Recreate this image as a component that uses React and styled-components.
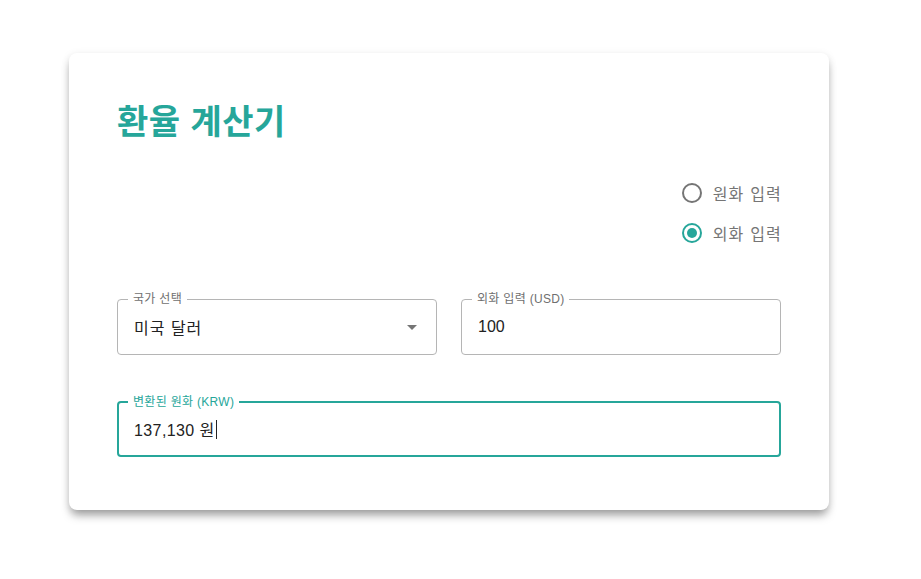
import React from "react";
import styled, { createGlobalStyle } from "styled-components";

const TEAL = "#26a69a";
const FONT = `"Liberation Sans", "Noto Sans CJK KR", "Noto Sans", sans-serif`;

const Global = createGlobalStyle`
  html, body { margin: 0; padding: 0; background: #ffffff; }
  body { font-family: ${FONT}; }
  * { box-sizing: border-box; }
`;

const Page = styled.div`
  padding: 53px 0 69px 69px;
`;

const Card = styled.div`
  width: 760px;
  background: #fff;
  border-radius: 8px;
  box-shadow: 0 7px 10px -2px rgba(0, 0, 0, 0.35), 0 2px 8px rgba(0, 0, 0, 0.1);
  padding: 48px 48px 53px;
`;

const Title = styled.h1`
  margin: 0;
  font-family: ${FONT};
  font-size: 34px;
  line-height: 42px;
  font-weight: 700;
  color: ${TEAL};
  letter-spacing: 0.5px;
`;

const RadioGroup = styled.div`
  display: flex;
  flex-direction: column;
  align-items: flex-end;
  margin-top: 30px;
`;

const Option = styled.label`
  display: flex;
  align-items: center;
  height: 40px;
  gap: 11px;
  font-size: 16px;
  letter-spacing: 1.2px;
  margin-right: -1px;
  color: #757575;
  cursor: pointer;
`;

const RadioCircle = styled.span`
  width: 20px;
  height: 20px;
  border-radius: 50%;
  border: 2px solid ${(p) => (p.$checked ? TEAL : "#757575")};
  display: flex;
  align-items: center;
  justify-content: center;
  &::after {
    content: "";
    width: 10px;
    height: 10px;
    border-radius: 50%;
    background: ${TEAL};
    display: ${(p) => (p.$checked ? "block" : "none")};
  }
`;

const Row = styled.div`
  display: grid;
  grid-template-columns: 1fr 1fr;
  gap: 24px;
  margin-top: ${(p) => p.$mt}px;
`;

const Field = styled.div`
  position: relative;
  height: 56px;
  border: ${(p) => (p.$focused ? `2px solid ${TEAL}` : "1px solid #b5b5b5")};
  border-radius: 4px;
  display: flex;
  align-items: center;
  padding: 0 ${(p) => (p.$focused ? 15 : 16)}px;
  margin-top: ${(p) => p.$mt || 0}px;
`;

const FieldLabel = styled.span`
  position: absolute;
  top: -9px;
  left: ${(p) => (p.$focused ? 9 : 10)}px;
  padding: 0 5px;
  background: #fff;
  font-size: 12px;
  line-height: 16px;
  letter-spacing: 0.3px;
  color: ${(p) => (p.$focused ? TEAL : "#6f6f6f")};
`;

const Value = styled.span`
  flex: 1;
  font-size: 16px;
  color: #222;
  display: flex;
  align-items: center;
  letter-spacing: ${(p) => p.$ls || 0}px;
`;

const Caret = styled.span`
  display: inline-block;
  width: 1px;
  height: 19px;
  background: #222;
  margin-left: 1px;
`;

const Arrow = styled.svg`
  width: 24px;
  height: 24px;
  fill: rgba(0, 0, 0, 0.54);
  margin-right: -4px;
`;

export default function App() {
  return (
    <>
      <Global />
      <Page>
        <Card>
          <Title>환율 계산기</Title>
          <RadioGroup>
            <Option>
              <RadioCircle />
              원화 입력
            </Option>
            <Option>
              <RadioCircle $checked />
              외화 입력
            </Option>
          </RadioGroup>
          <Row $mt={46}>
            <Field>
              <FieldLabel>국가 선택</FieldLabel>
              <Value $ls={1}>미국 달러</Value>
              <Arrow viewBox="0 0 24 24">
                <path d="M7 10l5 5 5-5z" />
              </Arrow>
            </Field>
            <Field>
              <FieldLabel>외화 입력 (USD)</FieldLabel>
              <Value>100</Value>
            </Field>
          </Row>
          <Field $focused $mt={46}>
            <FieldLabel $focused>변환된 원화 (KRW)</FieldLabel>
            <Value $ls={0.4}>
              137,130 원<Caret />
            </Value>
          </Field>
        </Card>
      </Page>
    </>
  );
}
